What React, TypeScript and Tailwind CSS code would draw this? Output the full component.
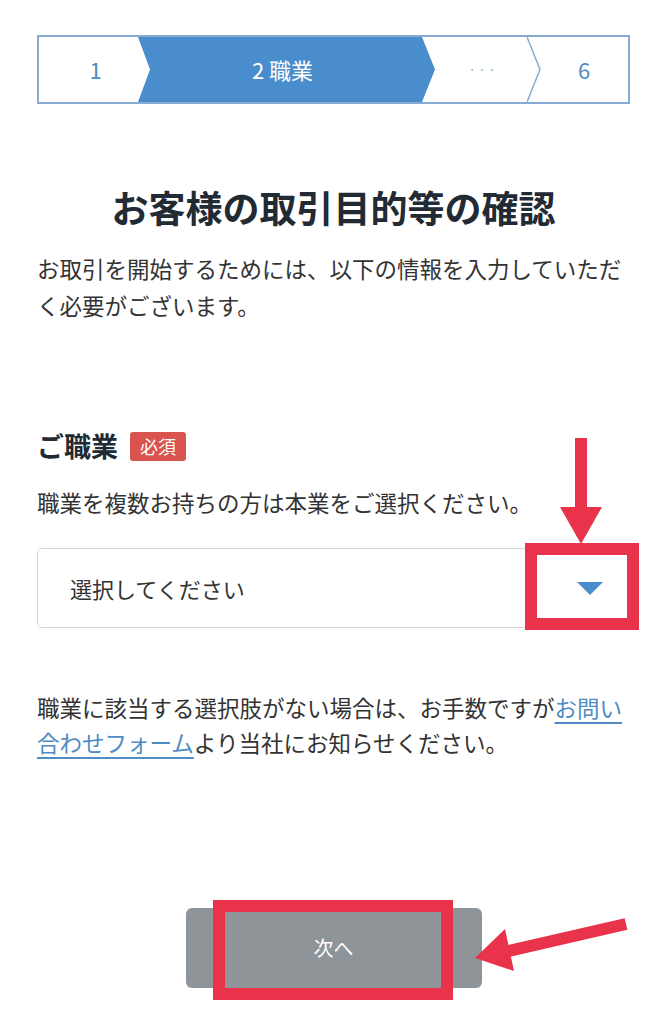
import React from "react";

const font = { fontFamily: '"Noto Sans CJK JP", "Noto Sans", sans-serif' };

export default function App() {
  return (
    <div className="relative w-[667px] h-[1024px] bg-white overflow-hidden" style={font}>
      <div className="px-[37px] pt-[35px]">
        {/* Stepper */}
        <div className="relative flex h-[69px] border-2 border-[#86acd3] bg-white">
          <div className="w-[99px] flex items-center justify-center pl-[14px] text-[22px] text-[#4f8bc4]">1</div>
          <div
            className="w-[297px] flex items-center justify-center bg-[#4a8dcc] text-white text-[22px]"
            style={{ clipPath: "polygon(0 0, calc(100% - 13px) 0, 100% 50%, calc(100% - 13px) 100%, 0 100%, 12px 50%)" }}
          >
            <span className="pr-[8px]">2 職業</span>
          </div>
          <div className="w-[92px] flex items-center justify-center pl-[4px] text-[14px] text-[#9fb8d0] tracking-[2px]">···</div>
          <div className="relative flex-1 flex items-center justify-center pl-[13px] text-[22px] text-[#4f8bc4]">
            <svg className="absolute left-0 top-0 h-full w-[14px]" viewBox="0 0 14 65" preserveAspectRatio="none">
              <polyline points="0,0 13,32.5 0,65" fill="none" stroke="#86acd3" strokeWidth="1.5" />
            </svg>
            6
          </div>
        </div>

        <h1 className="mt-[78px] text-center text-[37px] leading-[50px] font-bold text-[#222a33]">
          お客様の取引目的等の確認
        </h1>

        <p className="mt-[18px] text-[22.5px] leading-[37px] text-[#333]">
          お取引を開始するためには、以下の情報を入力していただく必要がございます。
        </p>

        <div className="mt-[105px] flex items-center gap-[12px] h-[34px]">
          <span className="text-[27px] font-bold text-[#222a33] leading-[34px]">ご職業</span>
          <span className="h-[29px] px-[10px] rounded-[3px] bg-[#d9534f] text-white text-[18px] leading-[29px]">必須</span>
        </div>

        <p className="mt-[21px] text-[22.5px] leading-[37px] text-[#333]">
          職業を複数お持ちの方は本業をご選択ください。
        </p>

        <div className="mt-[27px] h-[80px] border border-[#d6d6d6] rounded-[5px] flex items-center justify-between pl-[32px] pr-[26px]">
          <span className="text-[22px] text-[#333]">選択してください</span>
          <svg width="26" height="13" viewBox="0 0 26 13">
            <polygon points="0,0 26,0 13,13" fill="#4a8dcc" />
          </svg>
        </div>

        <p className="mt-[62px] text-[22.5px] leading-[35px] text-[#333]">
          職業に該当する選択肢がない場合は、お手数ですが
          <span className="text-[#4f8bc4] underline underline-offset-[5px]">お問い合わせフォーム</span>
          より当社にお知らせください。
        </p>

        <div className="mt-[148px] flex justify-center">
          <button className="w-[296px] h-[80px] rounded-[6px] bg-[#8f9499] text-white text-[20px]">次へ</button>
        </div>
      </div>

      {/* Annotations overlay */}
      <svg className="absolute left-0 top-0 pointer-events-none" width="667" height="1024" viewBox="0 0 667 1024">
        <rect x="531" y="549" width="102" height="75" fill="none" stroke="#e8334a" strokeWidth="12" />
        <rect x="219" y="906" width="228" height="88" fill="none" stroke="#e8334a" strokeWidth="12" />
        <line x1="581" y1="438" x2="581" y2="512" stroke="#e8334a" strokeWidth="12" />
        <polygon points="560,507 602,507 581,544" fill="#e8334a" />
        <line x1="626" y1="924" x2="500" y2="953" stroke="#e8334a" strokeWidth="12" />
        <polygon points="475,958 505,929 514,971" fill="#e8334a" />
      </svg>
    </div>
  );
}
